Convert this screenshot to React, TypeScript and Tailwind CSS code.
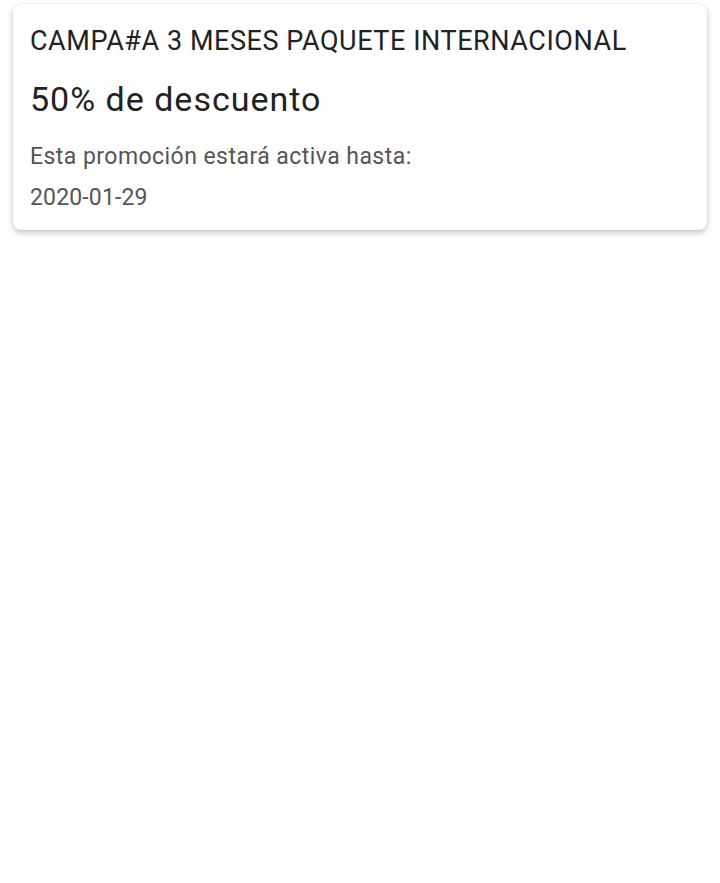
export default function App() {
  return (
    <div className="min-h-screen bg-white font-['Roboto','Noto_Sans',sans-serif]">
      {/* Promo card */}
      <div className="mx-[13px] mt-1 rounded-lg bg-white px-[17px] pt-[21px] pb-[18px] shadow-[0_3px_6px_rgba(0,0,0,0.22),0_0_2px_rgba(0,0,0,0.12)]">
        <h2 className="text-[27px] leading-[32px] tracking-[0.55px] text-[#222222]">CAMPA#A 3 MESES PAQUETE INTERNACIONAL</h2>
        <p className="mt-[22px] text-[34px] leading-[40px] tracking-[1px] text-[#222222]">50% de descuento</p>
        <p className="mt-[24px] text-[23px] leading-[28px] tracking-[0.45px] text-[#555555]">Esta promoción estará activa hasta:</p>
        <p className="mt-[13px] text-[23px] leading-[28px] tracking-[0.15px] text-[#555555]">2020-01-29</p>
      </div>
    </div>
  );
}
